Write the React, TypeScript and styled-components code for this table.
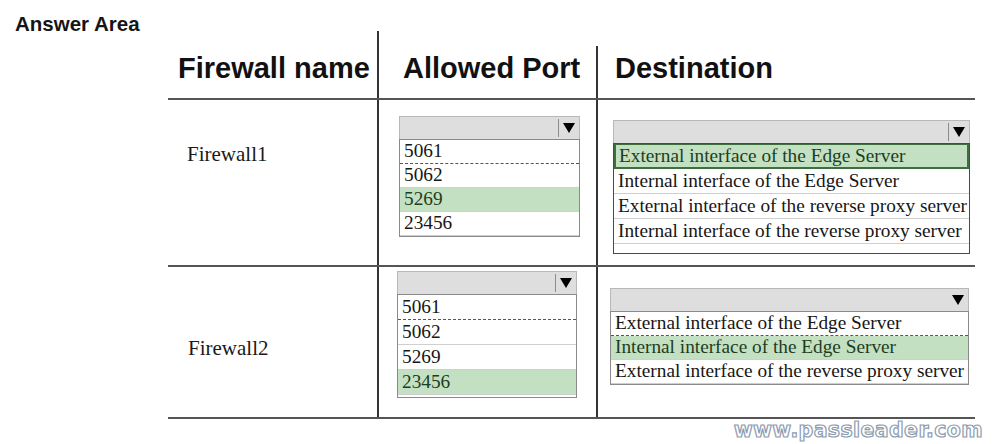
import React from "react";
import styled, { createGlobalStyle } from "styled-components";

const Global = createGlobalStyle`
  html, body { margin: 0; padding: 0; background: #ffffff; }
  body { width: 996px; height: 444px; overflow: hidden; }
`;

const Page = styled.div`
  padding: 17px 0 0 15px;
  font-family: "Liberation Sans", Arial, sans-serif;
  color: #111;
`;

const Title = styled.div`
  font-size: 20.5px;
  font-weight: bold;
  line-height: 14px;
  height: 14px;
  color: #151515;
`;

const Table = styled.div`
  margin-left: 153px;
  width: 807px;
`;

const HeaderRow = styled.div`
  display: flex;
  align-items: flex-end;
  border-bottom: 2px solid #555;
`;

const HeaderCell = styled.div<{ $w?: number; $h: number; $pl: number; $line?: boolean }>`
  box-sizing: border-box;
  ${(p) => (p.$w ? `width: ${p.$w}px;` : "flex: 1;")}
  height: ${(p) => p.$h}px;
  padding: 0 0 13px ${(p) => p.$pl}px;
  display: flex;
  align-items: flex-end;
  border-left: ${(p) => (p.$line ? "2px solid #333" : "none")};
  font-size: 29px;
  font-weight: bold;
  line-height: 33px;
  color: #111;
  white-space: nowrap;
`;

const Row = styled.div<{ $h: number }>`
  display: flex;
  height: ${(p) => p.$h}px;
  border-bottom: 2px solid #555;
`;

const Cell = styled.div<{ $w?: number; $pt: number; $pl: number; $line?: boolean }>`
  box-sizing: border-box;
  ${(p) => (p.$w ? `width: ${p.$w}px;` : "flex: 1;")}
  padding: ${(p) => p.$pt}px 0 0 ${(p) => p.$pl}px;
  border-left: ${(p) => (p.$line ? "2px solid #333" : "none")};
`;

const FirewallName = styled.div`
  font-family: "Liberation Serif", "Times New Roman", serif;
  font-size: 21px;
  line-height: 24px;
  color: #1a1a1a;
`;

const Dropdown = styled.div<{ $w: number }>`
  width: ${(p) => p.$w}px;
`;

const Bar = styled.div`
  box-sizing: border-box;
  height: 23px;
  background: #dedede;
  border: 1px solid #b8b8b8;
  border-bottom: none;
  display: flex;
  justify-content: flex-end;
`;

const ArrowBox = styled.div<{ $sep: boolean }>`
  width: 20px;
  display: flex;
  align-items: center;
  justify-content: center;
  border-left: ${(p) => (p.$sep ? "1px solid #8c8c8c" : "1px solid transparent")};
  margin: 2px 0;
`;

const Arrow = styled.div`
  width: 0;
  height: 0;
  border-left: 6.5px solid transparent;
  border-right: 6.5px solid transparent;
  border-top: 10px solid #000;
`;

const List = styled.div<{ $border: string; $gap: number }>`
  box-sizing: border-box;
  border: 1px solid ${(p) => p.$border};
  padding-bottom: ${(p) => p.$gap}px;
  background: #fff;
  overflow: hidden;
`;

const Item = styled.div<{ $h: number; $sel: boolean; $focus: boolean; $selBorder: boolean }>`
  box-sizing: border-box;
  height: ${(p) => p.$h}px;
  line-height: ${(p) => p.$h - 2}px;
  padding-left: 4px;
  font-family: "Liberation Serif", "Times New Roman", serif;
  font-size: 19.3px;
  white-space: nowrap;
  overflow: hidden;
  background: ${(p) => (p.$sel ? "#c4e0c2" : "#fff")};
  color: ${(p) => (p.$sel ? "#1d3d1d" : "#161616")};
  border-bottom: 1px ${(p) => (p.$focus ? "dashed #555" : "solid #cfcfcf")};
  ${(p) => (p.$selBorder ? "border: 2px solid #3f6f3f; border-top-width: 1px; padding-left: 3px; line-height: " + (p.$h - 4) + "px;" : "")}
`;

const Footer = styled.div`
  display: flex;
  justify-content: flex-end;
  width: 968px;
`;

const Watermark = styled.div`
  font-family: "DejaVu Sans", sans-serif;
  font-weight: bold;
  font-size: 20.5px;
  line-height: 22px;
  letter-spacing: 0.4px;
  color: #ffffff;
  -webkit-text-stroke: 1.2px #8d9bb0;
`;

type DDProps = {
  w: number;
  items: string[];
  selected: number;
  itemH: number;
  border: string;
  sep?: boolean;
  gap?: number;
  focus?: number;
  selBorder?: boolean;
};

const DropList = ({ w, items, selected, itemH, border, sep = true, gap = 0, focus = -1, selBorder = false }: DDProps) => (
  <Dropdown $w={w}>
    <Bar>
      <ArrowBox $sep={sep}>
        <Arrow />
      </ArrowBox>
    </Bar>
    <List $border={border} $gap={gap}>
      {items.map((t, i) => (
        <Item key={t} $h={itemH} $sel={i === selected} $focus={i === focus} $selBorder={selBorder && i === selected}>
          {t}
        </Item>
      ))}
    </List>
  </Dropdown>
);

const ports = ["5061", "5062", "5269", "23456"];
const dest4 = [
  "External interface of the Edge Server",
  "Internal interface of the Edge Server",
  "External interface of the reverse proxy server",
  "Internal interface of the reverse proxy server",
];
const dest3 = dest4.slice(0, 3);

export default function App() {
  return (
    <>
      <Global />
      <Page>
        <Title>Answer Area</Title>
        <Table>
          <HeaderRow>
            <HeaderCell $w={209} $h={67} $pl={10}>Firewall name</HeaderCell>
            <HeaderCell $w={219} $h={67} $pl={24} $line>Allowed Port</HeaderCell>
            <HeaderCell $h={52} $pl={17} $line>Destination</HeaderCell>
          </HeaderRow>
          <Row $h={165}>
            <Cell $w={209} $pt={42} $pl={19}>
              <FirewallName>Firewall1</FirewallName>
            </Cell>
            <Cell $w={219} $pt={16} $pl={20} $line>
              <DropList w={181} items={ports} selected={2} itemH={24} border="#8a8a8a" focus={0} />
            </Cell>
            <Cell $pt={20} $pl={15} $line>
              <DropList w={357} items={dest4} selected={0} itemH={25} border="#4a4a4a" gap={9} selBorder />
            </Cell>
          </Row>
          <Row $h={150}>
            <Cell $w={209} $pt={69} $pl={20}>
              <FirewallName>Firewall2</FirewallName>
            </Cell>
            <Cell $w={219} $pt={4} $pl={18} $line>
              <DropList w={180} items={ports} selected={3} itemH={25} border="#8a8a8a" focus={0} gap={2} />
            </Cell>
            <Cell $pt={21} $pl={12} $line>
              <DropList w={359} items={dest3} selected={1} itemH={24} border="#8a8a8a" sep={false} focus={0} />
            </Cell>
          </Row>
        </Table>
        <Footer>
          <Watermark>www.passleader.com</Watermark>
        </Footer>
      </Page>
    </>
  );
}
